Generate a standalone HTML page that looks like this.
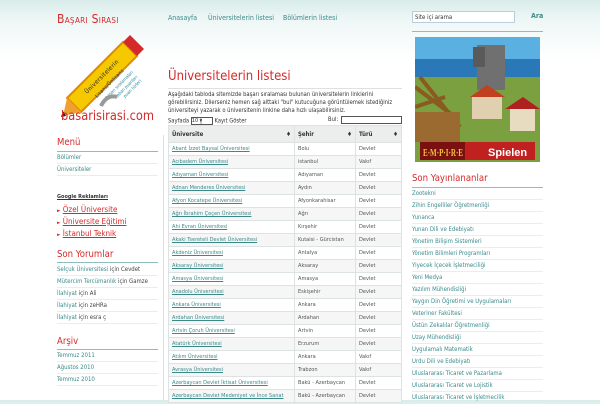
<!DOCTYPE html>
<html><head><meta charset="utf-8"><style>
*{margin:0;padding:0;box-sizing:border-box}
body{width:600px;height:400px;overflow:hidden;font-family:"DejaVu Sans","Liberation Sans",sans-serif;font-stretch:condensed;background:linear-gradient(#d8ecea 0px,#eef7f6 20px,#fff 60px,#fff);position:relative;color:#333}
.a{position:absolute;white-space:nowrap}
.red{color:#d42a2a}
.teal{color:#3a8a8a}
.h{font-size:9.5px;color:#d42a2a}
.line{position:absolute;height:1px;background:#8fbcbc}
.li{position:absolute;font-size:6px;color:#3a8a8a;border-bottom:1px solid #e6eeee;height:12px;line-height:11px;white-space:nowrap;overflow:hidden}
table{position:absolute;left:168px;top:125px;width:234px;border-collapse:collapse;font-size:5.6px;table-layout:fixed}
td,th{border:1px solid #dde3e3;height:13px;padding:0 3px;text-align:left;white-space:nowrap;overflow:hidden}
th{height:17px;background:#eceeee;font-weight:bold;color:#333;font-size:6px}
td{color:#555}
td a{color:#3a8a8a;text-decoration:underline}
tr:nth-child(odd) td{background:#f6f6f6}
</style></head><body>
<div class="a red" style="left:57px;top:12px;font-size:12px;font-variant:small-caps;letter-spacing:.3px">Başarı Sırası</div>
<div class="a teal" style="left:168px;top:14px;font-size:7px">Anasayfa</div>
<div class="a teal" style="left:208px;top:14px;font-size:7px">Üniversitelerin listesi</div>
<div class="a teal" style="left:283px;top:14px;font-size:7px">Bölümlerin listesi</div>
<div class="a" style="left:412px;top:11px;width:103px;height:12px;border:1px solid #bcd;background:#fff;font-size:6px;padding:2px 2px">Site içi arama</div>
<div class="a teal" style="left:531px;top:12px;font-size:7px;font-weight:bold">Ara</div>
<div class="line" style="left:412px;top:31px;width:131px"></div>

<!-- logo -->
<svg class="a" style="left:57px;top:30px" width="101" height="95" viewBox="0 0 101 95">
<polygon points="10,68 66,12 80,26 24,82" fill="#f5c800" stroke="#e08a00" stroke-width="2"/>
<polygon points="66,12 73,5 87,19 80,26" fill="#d42a2a"/>
<polygon points="10,68 24,82 6,86" fill="#f0a030"/>
<polygon points="6,81 9,86 4,87" fill="#222"/>
<text x="30" y="64" transform="rotate(-45 30 64)" font-size="6" fill="#222" font-family="DejaVu Sans" textLength="45">Üniversitelerin</text>
<text x="40" y="68" transform="rotate(-45 40 68)" font-size="5" fill="#222" font-family="DejaVu Sans" textLength="38">Lisans/Önlisans</text>
<text x="50" y="69" transform="rotate(-45 50 69)" font-size="4.5" fill="#2a8aa0" font-family="DejaVu Sans">başarı sıralamaları</text>
<text x="60" y="68" transform="rotate(-45 60 68)" font-size="4.5" fill="#2a8aa0" font-family="DejaVu Sans">taban puanları</text>
<text x="68" y="68" transform="rotate(-45 68 68)" font-size="4.5" fill="#2a8aa0" font-family="DejaVu Sans">puan türleri</text>
<path d="M44 76 q6 -12 16 -9" stroke="#999" stroke-width="4" fill="none"/>
<text x="4" y="90" font-size="13" fill="#d42a2a" font-family="DejaVu Sans" textLength="93" lengthAdjust="spacingAndGlyphs">basarisirasi.com</text>
</svg>

<div class="a h" style="left:57px;top:137px">Menü</div>
<div class="line" style="left:57px;top:151px;width:101px"></div>
<div class="li" style="left:57px;top:152px;width:101px">Bölümler</div>
<div class="li" style="left:57px;top:164px;width:101px">Üniversiteler</div>
<div class="a" style="left:57px;top:194px;font-size:5.5px;font-weight:bold;text-decoration:underline">Google Reklamları</div>
<div class="a red" style="left:57px;top:205px;font-size:8px"><span style="font-size:5px">►</span> <u>Özel Üniversite</u></div>
<div class="a red" style="left:57px;top:217px;font-size:8px"><span style="font-size:5px">►</span> <u>Üniversite Eğitimi</u></div>
<div class="a red" style="left:57px;top:229px;font-size:8px"><span style="font-size:5px">►</span> <u>İstanbul Teknik</u></div>
<div class="a h" style="left:57px;top:249px">Son Yorumlar</div>
<div class="line" style="left:57px;top:262px;width:101px"></div>
<div class="li" style="left:57px;top:264px;width:101px">Selçuk Üniversitesi <span style="color:#444">için Cevdet</span></div>
<div class="li" style="left:57px;top:276px;width:101px">Mütercim Tercümanlık <span style="color:#444">için Gamze</span></div>
<div class="li" style="left:57px;top:288px;width:101px">İlahiyat <span style="color:#444">için Ali</span></div>
<div class="li" style="left:57px;top:300px;width:101px">İlahiyat <span style="color:#444">için zeHRa</span></div>
<div class="li" style="left:57px;top:312px;width:101px">İlahiyat <span style="color:#444">için esra ç</span></div>
<div class="a h" style="left:57px;top:336px">Arşiv</div>
<div class="line" style="left:57px;top:349px;width:101px"></div>
<div class="li" style="left:57px;top:350px;width:101px">Temmuz 2011</div>
<div class="li" style="left:57px;top:362px;width:101px">Ağustos 2010</div>
<div class="li" style="left:57px;top:374px;width:101px">Temmuz 2010</div>

<div class="a" style="left:163px;top:135px;width:1px;height:265px;background:#ddd"></div>

<div class="a red" style="left:168px;top:69px;font-size:13px">Üniversitelerin listesi</div>
<div class="a" style="left:168px;top:88px;width:234px;height:1px;background:#e0e0e0"></div>
<div class="a" style="left:168px;top:91px;width:236px;font-size:5.8px;line-height:8px;white-space:normal;color:#333">Aşağıdaki tabloda sitemizde başarı sıralaması bulunan üniversitelerin linklerini görebilirsiniz. Dilerseniz hemen sağ alttaki "bul" kutucuğuna görüntülemek istediğiniz üniversiteyi yazarak o üniversitenin linkine daha hızlı ulaşabilirsiniz.</div>
<div class="a" style="left:168px;top:117px;font-size:5.8px">Sayfada <span style="display:inline-block;width:22px;height:8px;border:1px solid #555;vertical-align:middle;background:#fff;font-size:5.5px;line-height:6px">10 <span style="background:#ccc">▾</span></span> Kayıt Göster</div>
<div class="a" style="left:328px;top:117px;font-size:5.8px">Bul:</div>
<div class="a" style="left:341px;top:116px;width:61px;height:8px;border:1px solid #555;background:#fff"></div>
<table>
<colgroup><col style="width:126px"><col style="width:61px"><col></colgroup>
<tr><th>Üniversite <span style="float:right">♦</span></th><th>Şehir <span style="float:right">♦</span></th><th>Türü <span style="float:right">♦</span></th></tr>
<tr><td><a>Abant İzzet Baysal Üniversitesi</a></td><td>Bolu</td><td>Devlet</td></tr>
<tr><td><a>Acıbadem Üniversitesi</a></td><td>istanbul</td><td>Vakıf</td></tr>
<tr><td><a>Adıyaman Üniversitesi</a></td><td>Adıyaman</td><td>Devlet</td></tr>
<tr><td><a>Adnan Menderes Üniversitesi</a></td><td>Aydın</td><td>Devlet</td></tr>
<tr><td><a>Afyon Kocatepe Üniversitesi</a></td><td>Afyonkarahisar</td><td>Devlet</td></tr>
<tr><td><a>Ağrı İbrahim Çeçen Üniversitesi</a></td><td>Ağrı</td><td>Devlet</td></tr>
<tr><td><a>Ahi Evran Üniversitesi</a></td><td>Kırşehir</td><td>Devlet</td></tr>
<tr><td><a>Akaki Tsereteli Devlet Üniversitesi</a></td><td>Kutaisi - Gürcistan</td><td>Devlet</td></tr>
<tr><td><a>Akdeniz Üniversitesi</a></td><td>Antalya</td><td>Devlet</td></tr>
<tr><td><a>Aksaray Üniversitesi</a></td><td>Aksaray</td><td>Devlet</td></tr>
<tr><td><a>Amasya Üniversitesi</a></td><td>Amasya</td><td>Devlet</td></tr>
<tr><td><a>Anadolu Üniversitesi</a></td><td>Eskişehir</td><td>Devlet</td></tr>
<tr><td><a>Ankara Üniversitesi</a></td><td>Ankara</td><td>Devlet</td></tr>
<tr><td><a>Ardahan Üniversitesi</a></td><td>Ardahan</td><td>Devlet</td></tr>
<tr><td><a>Artvin Çoruh Üniversitesi</a></td><td>Artvin</td><td>Devlet</td></tr>
<tr><td><a>Atatürk Üniversitesi</a></td><td>Erzurum</td><td>Devlet</td></tr>
<tr><td><a>Atılım Üniversitesi</a></td><td>Ankara</td><td>Vakıf</td></tr>
<tr><td><a>Avrasya Üniversitesi</a></td><td>Trabzon</td><td>Vakıf</td></tr>
<tr><td><a>Azerbaycan Devlet İktisat Üniversitesi</a></td><td>Bakü - Azerbaycan</td><td>Devlet</td></tr>
<tr><td><a>Azerbaycan Devlet Medeniyet ve İnce Sanat</a></td><td>Bakü - Azerbaycan</td><td>Devlet</td></tr>
</table>

<!-- ad -->
<svg class="a" style="left:415px;top:37px" width="125" height="125" viewBox="0 0 125 125">
<rect width="125" height="25" fill="#5ab0e0"/>
<rect y="22" width="125" height="20" fill="#2a78b8"/>
<rect y="40" width="125" height="85" fill="#7aa040"/>
<rect x="62" y="8" width="28" height="45" fill="#707070"/>
<rect x="58" y="10" width="12" height="20" fill="#5a5a5a"/>
<polygon points="55,60 72,48 90,60" fill="#c04020"/>
<rect x="57" y="60" width="30" height="22" fill="#e0d0b0"/>
<polygon points="90,72 108,60 125,72" fill="#b02020"/>
<rect x="95" y="72" width="25" height="22" fill="#e8dcc0"/>
<path d="M0 50 L40 80 M5 40 L45 90 M0 70 L30 60" stroke="#8a5a20" stroke-width="4"/>
<rect x="0" y="75" width="45" height="30" fill="#9a6a30"/>
<rect x="5" y="105" width="115" height="18" fill="#c02020"/>
<rect x="5" y="105" width="45" height="18" fill="#7a1010"/>
<text x="8" y="119" font-size="11" fill="#f0c040" font-family="Liberation Serif" font-weight="bold" textLength="40" lengthAdjust="spacingAndGlyphs">E·M·P·I·R·E</text>
<text x="73" y="119" font-size="11" fill="#fff" font-family="Liberation Sans" font-weight="bold">Spielen</text>
</svg>

<div class="a h" style="left:412px;top:173px">Son Yayınlananlar</div>
<div class="line" style="left:412px;top:187px;width:131px"></div>
<div class="li" style="left:412px;top:188px;width:131px">Zootekni</div>
<div class="li" style="left:412px;top:200px;width:131px">Zihin Engelliler Öğretmenliği</div>
<div class="li" style="left:412px;top:212px;width:131px">Yunanca</div>
<div class="li" style="left:412px;top:224px;width:131px">Yunan Dili ve Edebiyatı</div>
<div class="li" style="left:412px;top:236px;width:131px">Yönetim Bilişim Sistemleri</div>
<div class="li" style="left:412px;top:248px;width:131px">Yönetim Bilimleri Programları</div>
<div class="li" style="left:412px;top:260px;width:131px">Yiyecek İçecek İşletmeciliği</div>
<div class="li" style="left:412px;top:272px;width:131px">Yeni Medya</div>
<div class="li" style="left:412px;top:284px;width:131px">Yazılım Mühendisliği</div>
<div class="li" style="left:412px;top:296px;width:131px">Yaygın Din Öğretimi ve Uygulamaları</div>
<div class="li" style="left:412px;top:308px;width:131px">Veteriner Fakültesi</div>
<div class="li" style="left:412px;top:320px;width:131px">Üstün Zekalılar Öğretmenliği</div>
<div class="li" style="left:412px;top:332px;width:131px">Uzay Mühendisliği</div>
<div class="li" style="left:412px;top:344px;width:131px">Uygulamalı Matematik</div>
<div class="li" style="left:412px;top:356px;width:131px">Urdu Dili ve Edebiyatı</div>
<div class="li" style="left:412px;top:368px;width:131px">Uluslararası Ticaret ve Pazarlama</div>
<div class="li" style="left:412px;top:380px;width:131px">Uluslararası Ticaret ve Lojistik</div>
<div class="li" style="left:412px;top:392px;width:131px">Uluslararası Ticaret ve İşletmecilik</div>
</body></html>
